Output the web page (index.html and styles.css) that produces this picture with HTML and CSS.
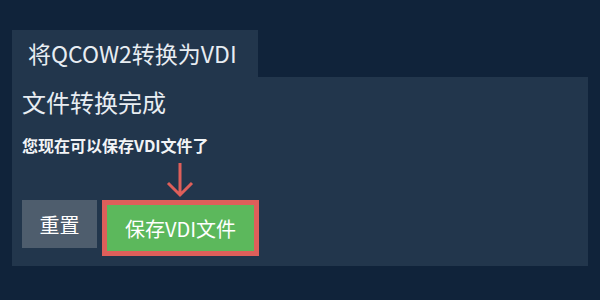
FILE: index.html
```html
<!DOCTYPE html>
<html lang="zh">
<head>
<meta charset="utf-8">
<link rel="stylesheet" href="styles.css">
</head>
<body>
<div class="page">
  <div class="tab">将QCOW2转换为VDI</div>
  <div class="panel">
    <h2 class="heading">文件转换完成</h2>
    <p class="note">您现在可以保存VDI文件了</p>
    <div class="actions">
      <button class="btn btn-reset">重置</button>
      <div class="save-wrap">
        <svg class="arrow" width="28" height="36" viewBox="0 0 28 36">
          <path d="M14 1 V33 M2 21 L14 33 L26 21" fill="none" stroke="#de5f5a" stroke-width="3"/>
        </svg>
        <button class="btn btn-save">保存VDI文件</button>
      </div>
    </div>
  </div>
</div>
</body>
</html>
```
FILE: styles.css
```css
html, body {
  margin: 0;
  padding: 0;
  background: #10233a;
  width: 600px;
  height: 300px;
  overflow: hidden;
  font-family: "Noto Sans CJK SC", "Noto Sans", sans-serif;
  color: #ffffff;
}
.page {
  padding: 30px 12px 0 12px;
}
.tab {
  display: inline-block;
  box-sizing: border-box;
  width: 246px;
  height: 47px;
  background: #22364c;
  font-size: 23px;
  line-height: 47px;
  padding-left: 16px;
  color: #e8edf2;
  vertical-align: top;
}
.panel {
  box-sizing: border-box;
  height: 189px;
  background: #22364c;
  padding: 8px 10px 0 10px;
}
.heading {
  margin: 0;
  font-weight: normal;
  font-size: 24px;
  line-height: 34px;
  color: #e8edf2;
}
.note {
  margin: 16px 0 0 0;
  font-weight: bold;
  font-size: 16px;
  line-height: 20px;
  color: #f2f4f6;
}
.actions {
  display: flex;
  align-items: flex-start;
  gap: 5px;
  margin-top: 45px;
}
.btn {
  border: none;
  margin: 0;
  font-family: "Noto Sans CJK SC", "Noto Sans", sans-serif;
  font-size: 20px;
  color: #ffffff;
  cursor: pointer;
}
.btn-reset {
  width: 75px;
  height: 48px;
  background: #4e5d6d;
  padding: 0;
}
.save-wrap {
  position: relative;
}
.arrow {
  position: absolute;
  left: 64px;
  top: -38px;
}
.btn-save {
  box-sizing: border-box;
  width: 157px;
  height: 56px;
  background: #5cb85c;
  border: 5px solid #de5f5a;
  padding: 0;
}
```
